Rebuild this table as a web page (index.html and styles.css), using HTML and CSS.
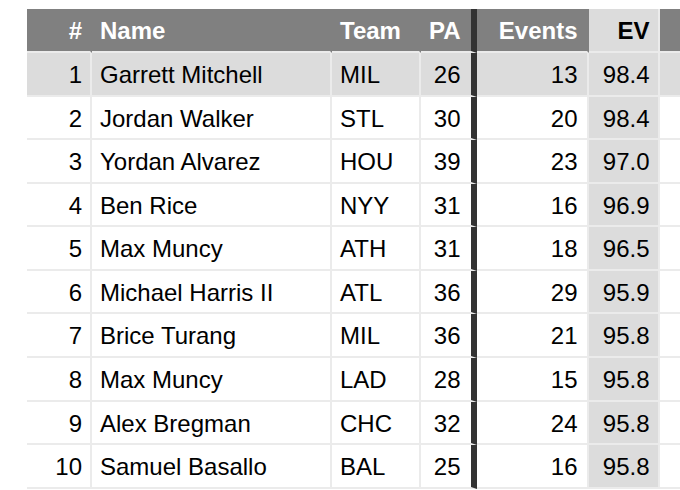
FILE: index.html
```html
<!DOCTYPE html>
<html>
<head>
<meta charset="utf-8">
<link rel="stylesheet" href="styles.css">
</head>
<body>
<div class="wrap">
<table class="stats">
  <thead>
    <tr>
      <th class="c-rank num">#</th>
      <th class="c-name">Name</th>
      <th class="c-team">Team</th>
      <th class="c-pa num split">PA</th>
      <th class="c-ev num">Events</th>
      <th class="c-velo num hl">EV</th>
      <th class="c-more"></th>
    </tr>
  </thead>
  <tbody>
    <tr class="active"><td class="num">1</td><td>Garrett Mitchell</td><td>MIL</td><td class="num split">26</td><td class="num">13</td><td class="num hl">98.4</td><td></td></tr>
    <tr><td class="num">2</td><td>Jordan Walker</td><td>STL</td><td class="num split">30</td><td class="num">20</td><td class="num hl">98.4</td><td></td></tr>
    <tr><td class="num">3</td><td>Yordan Alvarez</td><td>HOU</td><td class="num split">39</td><td class="num">23</td><td class="num hl">97.0</td><td></td></tr>
    <tr><td class="num">4</td><td>Ben Rice</td><td>NYY</td><td class="num split">31</td><td class="num">16</td><td class="num hl">96.9</td><td></td></tr>
    <tr><td class="num">5</td><td>Max Muncy</td><td>ATH</td><td class="num split">31</td><td class="num">18</td><td class="num hl">96.5</td><td></td></tr>
    <tr><td class="num">6</td><td>Michael Harris II</td><td>ATL</td><td class="num split">36</td><td class="num">29</td><td class="num hl">95.9</td><td></td></tr>
    <tr><td class="num">7</td><td>Brice Turang</td><td>MIL</td><td class="num split">36</td><td class="num">21</td><td class="num hl">95.8</td><td></td></tr>
    <tr><td class="num">8</td><td>Max Muncy</td><td>LAD</td><td class="num split">28</td><td class="num">15</td><td class="num hl">95.8</td><td></td></tr>
    <tr><td class="num">9</td><td>Alex Bregman</td><td>CHC</td><td class="num split">32</td><td class="num">24</td><td class="num hl">95.8</td><td></td></tr>
    <tr><td class="num">10</td><td>Samuel Basallo</td><td>BAL</td><td class="num split">25</td><td class="num">16</td><td class="num hl">95.8</td><td></td></tr>
  </tbody>
</table>
</div>
</body>
</html>
```

FILE: styles.css
```css
html, body {
  margin: 0;
  padding: 0;
  background: #ffffff;
  overflow: hidden;
}

.wrap {
  padding: 9px 0 0 27px;
  width: 720px;
}

.stats {
  border-collapse: separate;
  border-spacing: 0;
  table-layout: fixed;
  font-family: "Liberation Sans", Arial, sans-serif;
  font-size: 24px;
  color: #000;
}

.stats th,
.stats td {
  box-sizing: border-box;
  padding: 0 8px;
  text-align: left;
  white-space: nowrap;
  border-right: 2px solid #ebebeb;
  border-bottom: 2px solid #ebebeb;
}

.stats th {
  background: #808080;
  color: #fff;
  font-weight: bold;
  line-height: 41px;
  padding-top: 1px;
  border-right-color: #808080;
  border-bottom-color: #ebebeb;
}

.stats td {
  line-height: 39.56px;
  padding-top: 2px;
  padding-bottom: 0;
}

.stats .num { text-align: right; }

.c-rank { width: 65px; }
.c-name { width: 240px; }
.c-team { width: 89px; }
.c-pa { width: 55px; }
.c-ev { width: 112px; }
.c-velo { width: 71px; }
.c-more { width: 60px; }

.stats th.c-pa,
.stats td.split {
  border-right: 6px solid #333333;
  padding-right: 10px;
}

.stats td.num:nth-child(5),
.stats th.c-ev {
  padding-right: 9px;
}

.stats .active td {
  background: #dcdcdc;
}

.stats td.hl {
  background: #dcdcdc;
}

.stats th.hl {
  background: #dcdcdc;
  color: #000;
  border-right-color: #ebebeb;
}
```
